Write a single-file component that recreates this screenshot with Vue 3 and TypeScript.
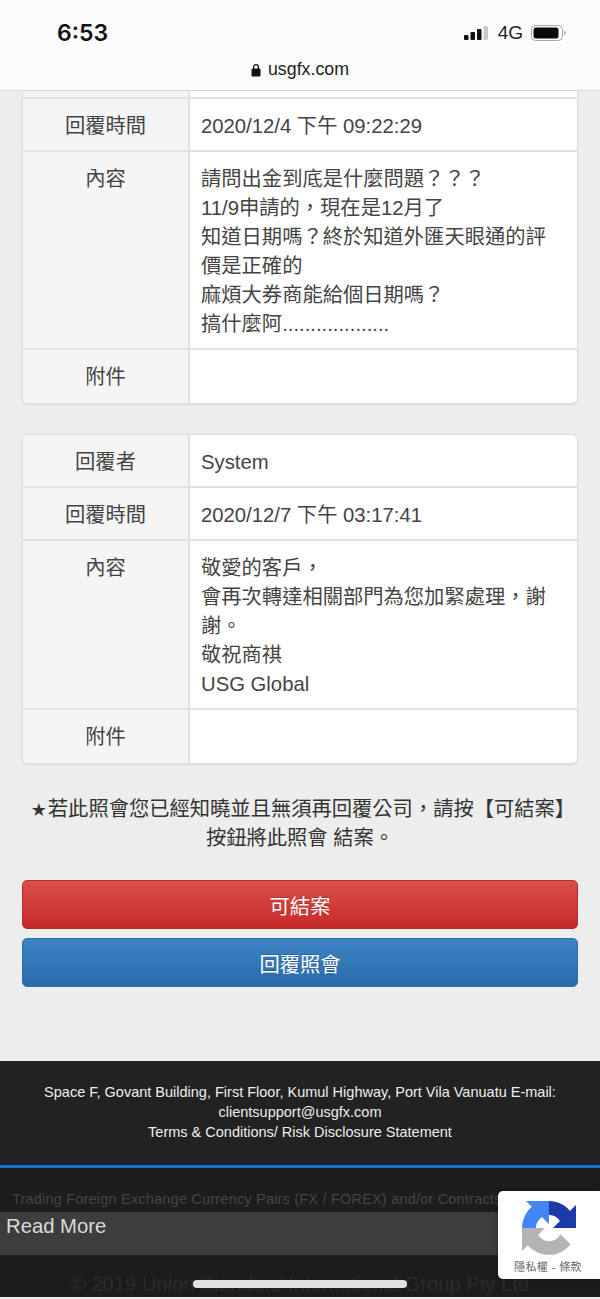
<script setup lang="ts">
interface Row {
  label: string;
  lines: string[];
}

const firstTable: Row[] = [
  { label: "回覆時間", lines: ["2020/12/4 下午 09:22:29"] },
  {
    label: "內容",
    lines: [
      "請問出金到底是什麼問題？？？",
      "11/9申請的，現在是12月了",
      "知道日期嗎？終於知道外匯天眼通的評",
      "價是正確的",
      "麻煩大券商能給個日期嗎？",
      "搞什麼阿...................",
    ],
  },
  { label: "附件", lines: [] },
];

const secondTable: Row[] = [
  { label: "回覆者", lines: ["System"] },
  { label: "回覆時間", lines: ["2020/12/7 下午 03:17:41"] },
  {
    label: "內容",
    lines: ["敬愛的客戶，", "會再次轉達相關部門為您加緊處理，謝", "謝。", "敬祝商祺", "USG Global"],
  },
  { label: "附件", lines: [] },
];

const tables = [
  { id: "first", rows: firstTable, cut: true },
  { id: "second", rows: secondTable, cut: false },
];
</script>

<template>
  <div class="screen">
    <header class="topbar">
      <div class="status">
        <span class="time">6:53</span>
        <div class="status-right">
          <svg class="signal" width="24" height="14" viewBox="0 0 24 14">
            <rect x="0" y="9" width="4.5" height="5" rx="1" fill="#111" />
            <rect x="6.5" y="6" width="4.5" height="8" rx="1" fill="#111" />
            <rect x="13" y="3" width="4.5" height="11" rx="1" fill="#111" />
            <rect x="19.5" y="0" width="4.5" height="14" rx="1" fill="#c9c9c9" />
          </svg>
          <span class="network">4G</span>
          <svg class="battery" width="35" height="16" viewBox="0 0 35 16">
            <rect x="0.5" y="0.5" width="31" height="15" rx="4" fill="none" stroke="#a8a8a8" />
            <rect x="2.5" y="2.5" width="25" height="11" rx="2.5" fill="#0a0a0a" />
            <path d="M33 5.5c1 .4 1.6 1.4 1.6 2.5s-.6 2.1-1.6 2.5z" fill="#a8a8a8" />
          </svg>
        </div>
      </div>
      <div class="address">
        <svg width="10" height="14" viewBox="0 0 10 14">
          <path d="M2.6 6V4a2.4 2.4 0 0 1 4.8 0v2" fill="none" stroke="#111" stroke-width="1.3" />
          <rect x="0.5" y="5.6" width="9" height="8" rx="1.4" fill="#111" />
        </svg>
        <span>usgfx.com</span>
      </div>
    </header>

    <main class="content">
      <div v-for="table in tables" :key="table.id" class="table" :class="{ cut: table.cut }">
        <div v-if="table.cut" class="row stub">
          <div class="label"></div>
          <div class="value"></div>
        </div>
        <div v-for="row in table.rows" :key="row.label" class="row">
          <div class="label">{{ row.label }}</div>
          <div class="value">
            <div v-for="line in row.lines" :key="line">{{ line }}</div>
          </div>
        </div>
      </div>

      <p class="note">
        <span class="star">★</span>若此照會您已經知曉並且無須再回覆公司，請按【可結案】<br />按鈕將此照會 結案。
      </p>

      <button class="btn danger">可結案</button>
      <button class="btn primary">回覆照會</button>
    </main>

    <footer class="footer">
      <div class="address-block">
        Space F, Govant Building, First Floor, Kumul Highway, Port Vila Vanuatu E-mail:<br />
        clientsupport@usgfx.com<br />
        Terms &amp; Conditions/ Risk Disclosure Statement
      </div>
      <div class="risk">
        <div class="risk-text">Trading Foreign Exchange Currency Pairs (FX / FOREX) and/or Contracts</div>
        <div class="read-more">Read More</div>
        <div class="copyright">© 2019 Union Standard International Group Pty Ltd</div>
      </div>
    </footer>

    <div class="recaptcha">
      <svg class="recaptcha-logo" width="54" height="54" viewBox="0 0 64 64">
        <path
          d="M64 31.955l-.033-1.37V4.687l-7.16 7.16C50.948 4.674 42.033.093 32.05.093c-10.4 0-19.622 4.96-25.458 12.64l11.738 11.86a15.55 15.55 0 0 1 4.757-5.339c2.05-1.6 4.952-2.906 8.962-2.906.484 0 .86.057 1.136.163 4.965.392 9.27 3.132 11.802 7.11l-8.308 8.31 32.314-.02"
          fill="#1c3aa9"
        />
        <path
          d="M31.965 0l-1.37.033H4.687l7.16 7.16C4.674 13.052.093 21.967.093 31.95c0 10.4 4.96 19.622 12.64 25.458l11.86-11.738a15.55 15.55 0 0 1-5.339-4.757c-1.6-2.05-2.906-4.952-2.906-8.962 0-.484.057-.86.163-1.136.392-4.965 3.132-9.27 7.11-11.802l8.31 8.308L31.965 0"
          fill="#4285f4"
        />
        <path
          d="M.002 31.965l.033 1.37v25.898l7.16-7.16c5.86 7.173 14.774 11.754 24.76 11.754 10.4 0 19.622-4.96 25.458-12.64l-11.738-11.86a15.55 15.55 0 0 1-4.757 5.339c-2.05 1.6-4.952 2.906-8.962 2.906-.484 0-.86-.057-1.136-.163-4.965-.392-9.27-3.132-11.802-7.11l8.308-8.31-32.314.02"
          fill="#b4b4b4"
        />
      </svg>
      <div class="recaptcha-text">隱私權 - 條款</div>
    </div>

    <div class="home-bar"></div>
  </div>
</template>

<style>
html,
body {
  margin: 0;
  background: #222;
}
</style>

<style scoped>
.screen {
  position: relative;
  width: 600px;
  height: 1299px;
  overflow: hidden;
  background: #ededed;
  font-family: "Liberation Sans", "Noto Sans CJK TC", sans-serif;
  color: #333;
}

.topbar {
  height: 91px;
  box-sizing: border-box;
  background: #fcfcfc;
  border-bottom: 1px solid #d8d8d8;
}

.status {
  height: 58px;
  display: flex;
  align-items: center;
  justify-content: space-between;
  padding: 8px 34px 0 57px;
  box-sizing: border-box;
}

.time {
  font-family: Inter, "Liberation Sans", sans-serif;
  font-size: 23px;
  font-weight: 600;
  color: #111;
}

.status-right {
  display: flex;
  align-items: center;
}

.network {
  margin: 0 8px 0 10px;
  font-size: 19px;
  color: #222;
}

.address {
  display: flex;
  align-items: center;
  justify-content: center;
  gap: 7px;
  padding-top: 1px;
  font-size: 17.8px;
  color: #222;
}

.content {
  padding: 0 22px;
}

.table {
  margin-bottom: 30px;
  background: #fff;
  border: 1px solid #dcdcdc;
  border-radius: 6px;
  overflow: hidden;
  box-shadow: 0 1px 2px rgba(0, 0, 0, 0.08);
}

.table.cut {
  border-top: 0;
  border-radius: 0 0 6px 6px;
}

.row {
  display: flex;
  border-bottom: 2px solid #e2e2e2;
  font-size: 20.3px;
  line-height: 29px;
}

.row:last-child {
  border-bottom: 0;
}

.stub {
  height: 6px;
}

.label {
  flex: 0 0 167px;
  box-sizing: border-box;
  padding: 13px 0 9px;
  background: #f5f5f5;
  border-right: 2px solid #e2e2e2;
  text-align: center;
  color: #444;
}

.value {
  flex: 1;
  min-height: 29px;
  padding: 13px 12px 9px 11px;
  color: #444;
}

.row:last-child .label,
.row:last-child .value {
  padding-bottom: 11px;
}

.stub .label,
.stub .value {
  padding: 0;
  min-height: 0;
}

.note {
  margin: 31px -4px 27px;
  font-size: 20.3px;
  line-height: 29px;
  text-align: center;
  color: #333;
}

.star {
  display: inline-block;
  width: 17px;
  margin-left: 6px;
  font-family: "DejaVu Sans", sans-serif;
  font-size: 18px;
  line-height: 20px;
  text-align: left;
}

.btn {
  display: block;
  width: 100%;
  height: 49px;
  margin-bottom: 9px;
  border: 1px solid #b92c28;
  border-radius: 5px;
  font-family: inherit;
  font-size: 20.3px;
  color: #fff;
  text-shadow: 0 -1px 0 rgba(0, 0, 0, 0.2);
}

.danger {
  background: linear-gradient(#dc4f4c, #c62a28);
  border-color: #b92c28;
}

.primary {
  background: linear-gradient(#3c84c6, #2a6aa8);
  border-color: #2c6ea6;
}

.footer {
  margin-top: 74px;
  background: #222;
}

.address-block {
  padding: 21px 30px 23px;
  font-size: 14.5px;
  line-height: 20px;
  text-align: center;
  color: #eee;
  border-bottom: 3px solid #1272cf;
}

.risk {
  background: #1b1c1e;
}

.risk-text {
  padding: 21px 0 3px 12px;
  white-space: nowrap;
  font-size: 14.5px;
  line-height: 20px;
  letter-spacing: 0.2px;
  color: #454545;
}

.read-more {
  height: 43px;
  padding-left: 6px;
  background: #3d3d3d;
  font-size: 20.3px;
  line-height: 28px;
  color: #dcdcdc;
}

.copyright {
  padding-top: 16px;
  font-size: 20.2px;
  line-height: 26px;
  text-align: center;
  color: #2b2b2b;
}

.recaptcha {
  position: absolute;
  left: 498px;
  top: 1191px;
  width: 102px;
  height: 88px;
  background: #fff;
  border-radius: 5px 0 0 5px;
  box-shadow: 0 0 4px rgba(0, 0, 0, 0.4);
}

.recaptcha-logo {
  position: absolute;
  left: 24px;
  top: 10px;
}

.recaptcha-text {
  position: absolute;
  left: 16px;
  top: 69px;
  font-size: 11px;
  line-height: 15px;
  letter-spacing: 0.4px;
  white-space: nowrap;
  color: #666;
}

.home-bar {
  position: absolute;
  left: 193px;
  top: 1280px;
  width: 214px;
  height: 8px;
  border-radius: 4px;
  background: #e2e2e2;
}
</style>
